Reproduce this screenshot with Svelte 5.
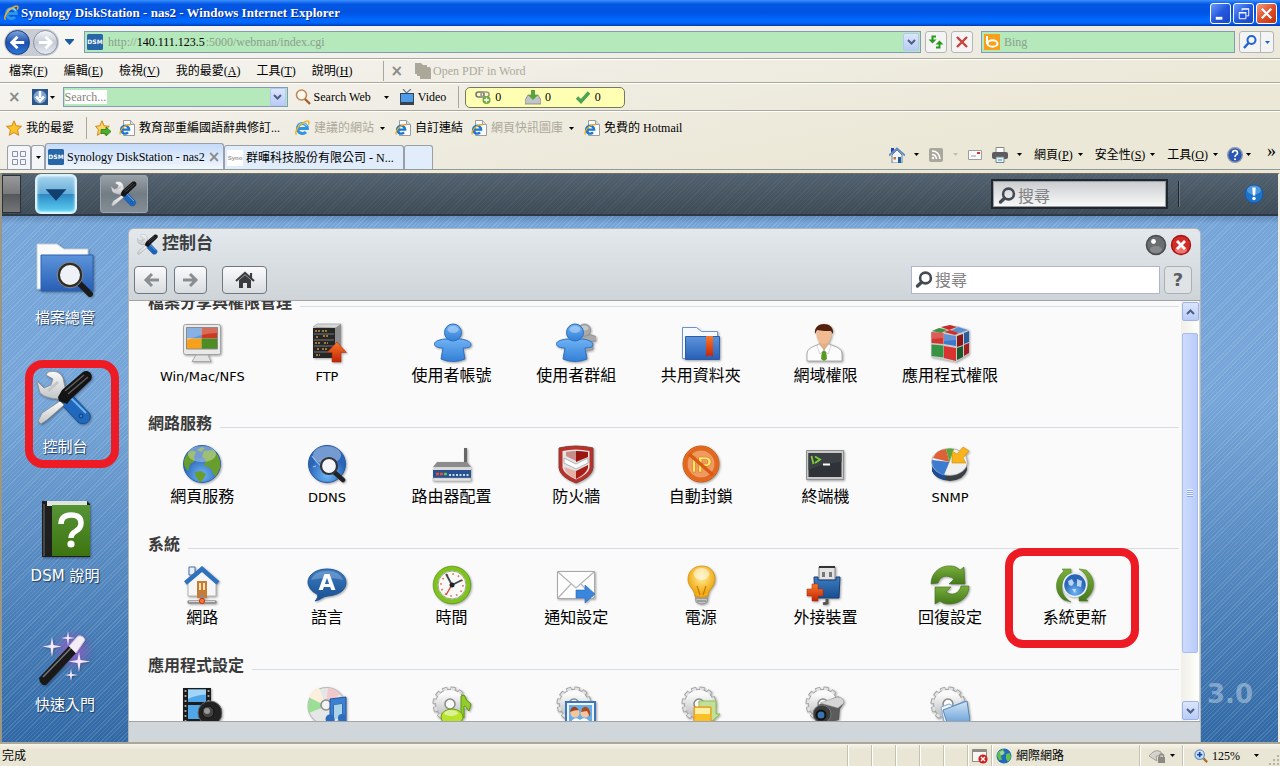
<script lang="ts">
  const menus = [
    { label: '檔案', key: 'F' },
    { label: '編輯', key: 'E' },
    { label: '檢視', key: 'V' },
    { label: '我的最愛', key: 'A' },
    { label: '工具', key: 'T' },
    { label: '說明', key: 'H' },
  ];

  const commands = [
    { label: '網頁', key: 'P' },
    { label: '安全性', key: 'S' },
    { label: '工具', key: 'O' },
  ];

  const shortcuts = [
    { icon: 'explorer', label: '檔案總管' },
    { icon: 'tools', label: '控制台', marked: true },
    { icon: 'book', label: 'DSM 說明' },
    { icon: 'wand', label: '快速入門' },
  ];

  const sections = [
    {
      title: '檔案分享與權限管理',
      items: [
        { icon: 'win', label: 'Win/Mac/NFS', latin: true },
        { icon: 'ftp', label: 'FTP', latin: true },
        { icon: 'user', label: '使用者帳號' },
        { icon: 'group', label: '使用者群組' },
        { icon: 'share', label: '共用資料夾' },
        { icon: 'domain', label: '網域權限' },
        { icon: 'cube', label: '應用程式權限' },
      ],
    },
    {
      title: '網路服務',
      items: [
        { icon: 'globe', label: '網頁服務' },
        { icon: 'ddns', label: 'DDNS', latin: true },
        { icon: 'router', label: '路由器配置' },
        { icon: 'firewall', label: '防火牆' },
        { icon: 'block', label: '自動封鎖' },
        { icon: 'terminal', label: '終端機' },
        { icon: 'snmp', label: 'SNMP', latin: true },
      ],
    },
    {
      title: '系統',
      items: [
        { icon: 'network', label: '網路' },
        { icon: 'language', label: '語言' },
        { icon: 'time', label: '時間' },
        { icon: 'mail', label: '通知設定' },
        { icon: 'power', label: '電源' },
        { icon: 'device', label: '外接裝置' },
        { icon: 'restore', label: '回復設定' },
        { icon: 'update', label: '系統更新', marked: true },
      ],
    },
    {
      title: '應用程式設定',
      items: [
        { icon: 'media', label: '' },
        { icon: 'itunes', label: '' },
        { icon: 'audio', label: '' },
        { icon: 'photo', label: '' },
        { icon: 'download', label: '' },
        { icon: 'camera', label: '' },
        { icon: 'station', label: '' },
      ],
    },
  ];
</script>

{#snippet caret()}
  <svg class="caret" viewBox="0 0 5 3" width="5" height="3"><path d="M0 0h5L2.500 3z" fill="currentColor" /></svg>
{/snippet}

{#snippet ie()}
  <svg viewBox="0 0 16 16" width="16" height="16">
    <path d="M4 8.600h9.400A5 5 0 1 0 12 12" fill="none" stroke="#2f94e4" stroke-width="3" />
    <path d="M4.500 6A4.800 4.800 0 0 1 9 3.400q3 .2 4 2.600" fill="none" stroke="#8fd2fa" stroke-width="1.200" />
    <path d="M2.600 14.600C.4 13 3 7.600 7 4.400s8-4.400 8-2.200c0 .8-.3 1.500-.8 2.400" fill="none" stroke="#f0b020" stroke-width="1.400" />
  </svg>
{/snippet}

{#snippet page()}
  <svg viewBox="0 0 16 16" width="16" height="16">
    <path d="M4.500.500h7l4 4v11h-11z" fill="#fdfdfd" stroke="#9c9c9c" />
    <path d="M11.500.500v4h4" fill="#ddd" stroke="#9c9c9c" />
    <path d="M2.500 9.600h7.600A4 4 0 1 0 9 12.400" fill="none" stroke="#1978d0" stroke-width="2.400" />
    <path d="M1.500 14.500C0 13 2 9 5 6.800s6-3 6-1.400" fill="none" stroke="#f0a818" stroke-width="1.200" />
  </svg>
{/snippet}

{#snippet lens()}
  <svg viewBox="0 0 18 18" width="18" height="18">
    <circle cx="10.500" cy="7" r="5.400" fill="none" stroke="#444b52" stroke-width="2.600" />
    <path d="M6.500 11.200L2.500 15" stroke="#444b52" stroke-width="3.400" stroke-linecap="round" />
  </svg>
{/snippet}

{#snippet dsm()}
  <svg viewBox="0 0 16 16" width="16" height="16">
    <rect width="16" height="16" rx="1.500" fill="#2766a8" />
    <text x="8" y="10" text-anchor="middle" class="mini">DSM</text>
  </svg>
{/snippet}

{#snippet gear()}
  <circle cx="17" cy="17" r="15" fill="none" stroke="#a5a5a5" stroke-width="5" stroke-dasharray="4.850 3" />
  <circle cx="17" cy="17" r="10" fill="none" stroke="#a5a5a5" stroke-width="10" />
  <circle cx="17" cy="17" r="14.500" fill="none" stroke="#e2e2e2" stroke-width="4" stroke-dasharray="3.600 3.990" stroke-dashoffset="-.6" />
  <circle cx="17" cy="17" r="9.500" fill="none" stroke="url(#silver)" stroke-width="9" />
  <circle cx="17" cy="17" r="5" fill="#fafafa" stroke="#8a8a8a" stroke-width="1.500" />
{/snippet}

{#snippet person(fill: string, line: string)}
  <path d="M12 15C4 16 1 18 1.500 20.500S6 24 10 24L8 35q12 5 24 0l-2-11c6 0 8-1 8-3.500S34 16 28 15z" {fill} stroke={line} />
  <circle cx="20" cy="8.500" r="8.500" {fill} stroke={line} />
  <ellipse cx="20" cy="5.500" rx="5.500" ry="3.500" fill="#fff" opacity=".35" />
{/snippet}

{#snippet tools()}
  <path d="M11 2Q22-1 26 8l3 14-6 7Q9 29 3 23L0 11l7 7 7-3 2-6-7-4z" fill="url(#silver)" stroke="#8c8c8c" stroke-width=".8" />
  <path d="M11 21l10-9" stroke="#c4c6c8" stroke-width="3" />
  <path d="M24 34l11-9 17 18c3 4 0 9-3 10s-6 1-8-1z" fill="#1f68bd" stroke="#174f91" />
  <path d="M28 33l6-5 15 15" fill="none" stroke="#72b4f0" stroke-width="2" />
  <circle cx="44" cy="46" r="2" fill="#2f7fd0" stroke="#113a6e" />
  <path d="M23 31l4 4L10 50l-6 4-3-3 4-8z" fill="url(#silver)" stroke="#888" stroke-width=".8" />
  <path d="M21 27l4-7L46 2c5-3 11 2 8 8L34 29l-4 5-8-3z" fill="#141414" />
  <path d="M28 21L47 5M31 24L51 7" stroke="#5c5c5c" stroke-width="1.500" />
{/snippet}

{#snippet appIcon(name: string)}
  <svg class="app-icon" viewBox="-1 -1 40 40" width="40" height="40" aria-hidden="true">
    {#if name === 'win'}
      <rect x=".5" y=".5" width="37" height="30" rx="2" fill="#e9e9e9" stroke="#a2a2a2" />
      <path d="M13 31h12l3 6.500H9z" fill="#e4e4e4" stroke="#a8a8a8" />
      <path d="M3.500 3.500h15v11h-15z" fill="#5f97dd" />
      <path d="M18.500 3.500h16v11h-16z" fill="#cb3a22" />
      <path d="M3.500 14.500h15V25h-15z" fill="#f9a01b" />
      <path d="M18.500 14.500h16V25h-16z" fill="#4d8c22" />
      <path d="M3.500 3.500h31V9Q18 9 3.500 17z" fill="#fff" opacity=".25" />
      <path d="M3.500 3.500h31V25h-31z" fill="none" stroke="#8a8a8a" />
    {:else if name === 'ftp'}
      <path d="M5 3l4-3h24l-4 4z" fill="#d8d8d8" stroke="#999" stroke-width=".6" />
      <path d="M27 4l6-4v30l-6 4z" fill="#8d8d8d" />
      <path d="M5 4h22v30H5z" fill="#262626" />
      <path d="M6 10h20M6 16h20M6 22h20M6 28h20" stroke="#777" stroke-width="1.200" />
      <path d="M7 7h5m2 0h6M8 13h3m4-1h5M7 19h6m3 0h4M9 25h3m2 0h6M8 31h4" stroke="#c99440" stroke-width="1.500" stroke-dasharray="2 1" />
      <path d="M29 18l9.500 10.500H33V38h-9v-9.500h-5z" fill="url(#redArrow)" stroke="#a82706" stroke-width=".5" />
    {:else if name === 'user'}
      {@render person('url(#person)', '#2c6fc0')}
    {:else if name === 'group'}
      <g transform="translate(13 0) scale(.72)">{@render person('#a9a9a9', '#868686')}</g>
      <g transform="translate(-2 0)">{@render person('url(#person)', '#2c6fc0')}</g>
    {:else if name === 'share'}
      <path d="M.5 3.500h14l5 4h16v27H.5z" fill="#f5f8fc" stroke="#6e93c6" />
      <path d="M3.500 12.500h34v23h-34z" fill="url(#folder)" stroke="#2b5ca8" />
      <path d="M24 12h7v21l-3.500-2-3.500 2z" fill="url(#redArrow)" />
    {:else if name === 'domain'}
      <path d="M13 16h10v8l-5 4-5-4z" fill="#eaae7e" />
      <path d="M1 37V30c0-6 6-7 12-10l5 6 5-6c7 3 13 4 13 10v7z" fill="#fcfcfc" stroke="#aaa" />
      <ellipse cx="18" cy="11" rx="7.500" ry="9" fill="#f0bb90" />
      <path d="M9 10C8 3 13 0 18 0s10 3 9 10l-2-3c-4 0-9 0-14-1z" fill="#54210d" />
      <path d="M16 26l2-1.500 2 1.500 1 9-3 2-3-2z" fill="#5a9a20" />
      <path d="M13 20l5 6-4 4-3-8zm10 0l-5 6 4 4 3-8z" fill="#fff" stroke="#bbb" stroke-width=".6" />
    {:else if name === 'cube'}
      <path d="M0 8l12-5 14-1 12 4v24l-13 8L0 33z" fill="#ccc" />
      <path d="M1 7l7-3 8 2-6 3z" fill="#3c9140" />
      <path d="M10 3l9-2 7 2-8 3z" fill="#c62c27" />
      <path d="M27 3l10 3-8 3-9-2z" fill="#5890d0" />
      <path d="M13 8l6-2 9 3-4 2z" fill="#d0302b" />
      <path d="M.5 8l12 1v11L.5 19z" fill="#d2352e" />
      <path d="M13 10l12 2v10l-12-2z" fill="#3e78c8" />
      <path d="M.5 20.500l12 1v12L.5 32z" fill="#399344" />
      <path d="M13 22l12 2v13l-12-3z" fill="#d8332e" />
      <path d="M26 12l6-2v11l-6 2z" fill="#8c1518" />
      <path d="M33 9l5-2v11l-5 2z" fill="#285da0" />
      <path d="M26 24l6-2v11l-6 3z" fill="#1c5a2a" />
      <path d="M33 21l5-2v10l-5 3z" fill="#a11e20" />
      <path d="M1 8l11 1v5L1 15zm12 2l12 2v4l-12 1z" fill="#fff" opacity=".2" />
    {:else if name === 'globe'}
      <circle cx="19" cy="19" r="18.500" fill="url(#sphere)" stroke="#2866ae" />
      <path d="M2 13C5 6 9 4 13 7l-2 5 1 4-5 3-2 7C1 22 0 18 2 13zM21 6l9-1c5 4 8 10 7 18l-4 8c-4-1-3-6-6-8l-6-3 2-5-4-3zM14 5l5-3 3 1-4 4zM12 27l6-1 5 3-2 4-3 4c-4-2-6-6-6-10z" fill="#6a9e2c" />
      <ellipse cx="19" cy="9" rx="14" ry="8" fill="#fff" opacity=".35" />
    {:else if name === 'ddns'}
      <circle cx="19" cy="19" r="18.500" fill="url(#sphere)" stroke="#2358a4" />
      <path d="M4 11q8 12 22 18M5 22l3-1" fill="none" stroke="#cfe0f7" stroke-width="1.200" opacity=".7" />
      <ellipse cx="19" cy="10" rx="14" ry="9" fill="#fff" opacity=".35" />
      <path d="M26 27l9 8" stroke="#222" stroke-width="4.500" stroke-linecap="round" />
      <circle cx="21" cy="21" r="8" fill="#f4f6fa" stroke="#333" stroke-width="2.200" />
    {:else if name === 'router'}
      <path d="M31 3h3v14h-3z" fill="#666" />
      <path d="M4 17h30l4 5H0z" fill="#8b8b8b" />
      <path d="M0 22h38v4H0z" fill="#d8d8d8" />
      <path d="M0 25h38v9H0z" fill="#27518f" />
      <path d="M0 33h38v3H0z" fill="#e4e4e4" stroke="#aaa" stroke-width=".5" />
      <path d="M3 29h3m1 0h3" stroke="#ef4c35" stroke-width="2.500" />
      <path d="M11 29h3" stroke="#6cc04c" stroke-width="2.500" />
      <path d="M16 30h20" stroke="#c8daf2" stroke-width="2" stroke-dasharray="2 1.500" />
    {:else if name === 'firewall'}
      <path d="M2 3q17-4 34 0v20q-1 9-17 15Q3 32 2 23z" fill="#b8322c" stroke="#8b3a36" />
      <path d="M5.500 6q13.500-3 27 0v17q-1 6-13.500 11.500Q7 29 5.500 23z" fill="#e4e4e4" />
      <path d="M9 7q5-1 10-1v10L9 11z" fill="#c98d88" />
      <path d="M19 6q6 0 12 1v5l-12 5z" fill="#9a1610" />
      <path d="M7 13l12 6 12-6v5l-12 6-12-6z" fill="#fff" stroke="#a2a2a2" stroke-width=".8" />
      <path d="M19 26v8q10-5 12-11v-3z" fill="#a81d17" />
      <path d="M19 26v8Q8 29 7 22z" fill="#e5b0a6" />
    {:else if name === 'block'}
      <circle cx="19" cy="19" r="18" fill="#ef8a3e" stroke="#c65518" />
      <circle cx="19" cy="19" r="13.500" fill="#ee9a62" />
      <text x="19.500" y="27" text-anchor="middle" class="ip">IP</text>
      <circle cx="19" cy="19" r="15.500" fill="none" stroke="#e2681f" stroke-width="4" />
      <path d="M7 9l24 21" stroke="#d95a14" stroke-width="3.500" />
    {:else if name === 'terminal'}
      <path d="M.5 5.500h37v29H.5z" fill="#c9c9c9" stroke="#909090" />
      <path d="M2.500 8h33v24h-33z" fill="#2f3236" />
      <path d="M2.500 8h33v9q-18 1-33 8z" fill="#3c3f43" />
      <path d="M5.500 11l2 8M9 11.500l5 3-5 3.500" fill="none" stroke="#77cf35" stroke-width="1.800" />
      <path d="M17 19.500h7" stroke="#fff" stroke-width="2" />
    {:else if name === 'snmp'}
      <path d="M1 18v8q4 9 18 10 14-1 17-11v-8z" fill="#3a3f46" />
      <path d="M1 18v8q3 7 13 9l4-15z" fill="#1c4c96" />
      <ellipse cx="18.500" cy="17" rx="18" ry="13.500" fill="#f0f0f0" stroke="#999" stroke-width=".6" />
      <path d="M18.500 17L1 15q-1 10 12 15z" fill="#3b7bd0" />
      <path d="M18.500 17L2 13Q5 5 15 4z" fill="#dd6036" />
      <path d="M18.500 17L15 4q4-1 8 0z" fill="#58a83c" />
      <path d="M32 2l6 4-6 7 3 5H21V6l5 3z" fill="#f9b41c" stroke="#cf8808" stroke-width=".6" />
    {:else if name === 'network'}
      <path d="M6 1h6v8H6z" fill="#eee" stroke="#4176b4" />
      <path d="M5 14L19 3l14 11v16H5z" fill="#f6f6f6" stroke="#b4b4b4" />
      <path d="M14 15h10v17H14z" fill="#c97a35" />
      <path d="M16 17h2v7h-2zm4 0h2v7h-2z" fill="#fde6b2" />
      <path d="M2.500 17L19 3l16 14" fill="none" stroke="#2e72bd" stroke-width="4.500" />
      <path d="M19 30v5M6 36h26" stroke="#8d8d8d" stroke-width="3.500" stroke-linecap="round" />
      <path d="M6 35.500h26" stroke="#d6d6d6" stroke-width="1.200" />
      <circle cx="19" cy="35" r="2.600" fill="#f7792a" stroke="#cf2f10" />
    {:else if name === 'language'}
      <path d="M19 3c11 0 19 6 19 13.500S31 29 20 30c-5 0-7 4-13 5 3-3 3-5 2-7-5-2-9-7-9-12C0 9 8 3 19 3z" fill="url(#bubble)" stroke="#1f5797" />
      <path d="M3 14Q6 5 19 5t16 9q-15-4-32 0z" fill="#fff" opacity=".22" />
      <text x="19" y="24" text-anchor="middle" class="big-a">A</text>
    {:else if name === 'time'}
      <circle cx="19" cy="19" r="16.500" fill="#f8f8f8" stroke="#7fc31c" stroke-width="4.500" />
      <circle cx="19" cy="19" r="18.800" fill="none" stroke="#528b10" stroke-width=".7" />
      <circle cx="19" cy="19" r="14" fill="none" stroke="#9aa88c" />
      <circle cx="19" cy="19" r="11" fill="none" stroke="#e56a4c" stroke-width="1.600" stroke-dasharray="1.600 4.160" />
      <path d="M19 19L13 8M19 19l10-5" stroke="#444" stroke-width="1.800" />
      <path d="M20 17l-7 12" stroke="#e0452c" stroke-width="1.400" />
      <circle cx="19" cy="19" r="2.500" fill="#222" />
    {:else if name === 'mail'}
      <path d="M.5 5.500h37v27H.5z" fill="#fdfdfd" stroke="#a8a8a8" />
      <path d="M1 32l13-14M37 32L24 18M1 6l18 16L37 6" fill="none" stroke="#b4b4b4" stroke-width="1.200" />
      <path d="M19 24h9v-5l10 9-10 9v-5h-9z" fill="#3987dc" stroke="#2868b6" stroke-width=".6" />
    {:else if name === 'power'}
      <path d="M13 28h13l-1 8q-5 4-11 0z" fill="#c4c4c4" stroke="#878787" stroke-width=".8" />
      <path d="M14 32h11M15 35h9" stroke="#777" />
      <path d="M20 0C11 0 6 6 6 13c0 8 6 9 7 17q7 3 13 0c1-8 7-9 7-17C33 6 28 0 20 0z" fill="url(#bulb)" stroke="#cf8d0b" stroke-width=".7" />
      <path d="M15 20l3 9M24 20l-3 9" stroke="#c47a08" stroke-width="1.200" />
      <ellipse cx="19.500" cy="8" rx="8" ry="6" fill="#fff" opacity=".5" />
    {:else if name === 'device'}
      <path d="M13 1h16v13H13z" fill="#e2e2e2" stroke="#888" /><path d="M13 1h16" stroke="#333" stroke-width="2" />
      <path d="M16 6h3v5h-3zm7 0h3v5h-3z" fill="#777" />
      <path d="M8 11h4v3h18v-3h4l-1 21H9z" fill="url(#bubble)" stroke="#1b3e75" />
      <path d="M21 33v4l-4 1" fill="none" stroke="#555" stroke-width="3" />
      <path d="M6 18h6v5h5v7h-5v5H6v-5H1v-7h5z" fill="url(#redArrow)" stroke="#aa2806" stroke-width=".5" />
    {:else if name === 'restore'}
      <path d="M0 18C0 6 10-1 20 0c4 0 7 2 9 4l4-3 1 17H18l5-5C16 8 9 10 7 17z" fill="url(#green)" stroke="#446f1c" stroke-width=".6" />
      <path d="M38 20C38 32 28 38 18 38c-4 0-7-1-9-3l-5 3V21h16l-5 5c6 4 13 2 15-6z" fill="url(#green)" stroke="#446f1c" stroke-width=".6" />
    {:else if name === 'update'}
      <path d="M15 3L6 3l2 2C-2 13-2 27 8 34l7 2C3 29 4 16 11 9l4 3z" fill="url(#green)" stroke="#4c7920" stroke-width=".5" />
      <path d="M23 35l9 0-2-2c10-8 10-21 0-29l-7-1c12 7 11 20 4 26l-4-3z" fill="url(#green)" stroke="#4c7920" stroke-width=".5" />
      <circle cx="19" cy="19" r="11.500" fill="url(#sphere)" stroke="#e8f0fa" stroke-width="1.500" />
      <path d="M12 15l4-2 2 4-2 3-3-1zM21 13l5 2-1 6-4-1zM16 23l4 0-1 4z" fill="#dcecff" opacity=".8" />
    {:else if name === 'media'}
      <path d="M0 1h28v37H0z" fill="#1c1c1c" />
      <path d="M2.500 3v34M25.500 3v34" stroke="#a5a5a5" stroke-width="1.800" stroke-dasharray="2 3" />
      <path d="M5 2.500h18V15H5zM5 18h18v14H5z" fill="#4fa7e8" />
      <path d="M5 2.500h18v5Q12 8 5 12z" fill="#a2d4f8" />
      <circle cx="27" cy="26" r="12" fill="#222" stroke="#666" />
      <circle cx="25" cy="25" r="6" fill="#444" stroke="#111" /><circle cx="24" cy="24" r="3" fill="#999" />
    {:else if name === 'itunes'}
      <circle cx="18.500" cy="19" r="18.500" fill="#e4e7e6" stroke="#b5b5b5" />
      <path d="M18 19L1 10q3-7 10-9z" fill="#fcf0dc" /><path d="M18 19L1 26Q-1 18 2 11z" fill="#9adf94" />
      <path d="M18 19L20 1q8 1 12 6z" fill="#f3c8cc" /><path d="M18 19l15-10q4 5 4 9z" fill="#c8d7f2" />
      <circle cx="18" cy="18" r="5" fill="#f3f3f3" stroke="#8b8b8b" stroke-width="1.500" />
      <path d="M22 12l16-2v24h-4V17l-8 1v18h-4z" fill="#3d7fd0" stroke="#22569c" />
      <path d="M26 18l8-1v15h-8z" fill="#a9d4e8" />
      <circle cx="22" cy="32" r="4.500" fill="#2c6cbf" /><circle cx="34" cy="31" r="4" fill="#2c6cbf" />
    {:else if name === 'audio'}
      {@render gear()}
      <path d="M28 28V9l3-1q2 6 7 9-1 4-2 7-3-5-5-5v12z" fill="#93cd2c" stroke="#5b9514" />
      <ellipse cx="19" cy="30" rx="11" ry="8" fill="#b9e22a" stroke="#66a012" />
      <ellipse cx="18" cy="26" rx="7" ry="3" fill="#fff" opacity=".5" />
    {:else if name === 'photo'}
      {@render gear()}
      <path d="M9 15h29v24H9z" fill="#eef4fb" stroke="#3e74b8" stroke-width="2" />
      <path d="M12 18h23v20H12z" fill="#67aee8" />
      <circle cx="18" cy="26" r="4.500" fill="#f3c79d" /><path d="M13 25q1-6 6-5l3 3q-5 0-9 2z" fill="#a2431a" />
      <circle cx="28" cy="26" r="4.500" fill="#f3c79d" /><path d="M24 25q1-6 6-5 4 3 3 10l-3-6z" fill="#b04a1c" />
      <path d="M12 38q5-10 11-5 6-5 12 5z" fill="#fff" />
    {:else if name === 'download'}
      {@render gear()}
      <path d="M17 14h17v13h4l-10 9H17z" fill="#c3e09a" stroke="#8abf52" />
      <path d="M12 20h17v14h4l-10 6-14-5h3z" fill="#fcbf28" stroke="#e49014" />
      <path d="M13 21h15v6H13z" fill="#fdf0a4" />
    {:else if name === 'camera'}
      {@render gear()}
      <path d="M12 18l18-8q8 0 8 6l-4 6-1 11-20 5z" fill="#5b5b5b" />
      <path d="M14 16l17-6q7 0 7 6l-6 5z" fill="#d6d6d6" stroke="#999" stroke-width=".5" />
      <circle cx="16" cy="27" r="9" fill="#3c3c3c" stroke="#777" /><circle cx="15" cy="28" r="4.500" fill="#3a74b0" stroke="#111" stroke-width="2" />
    {:else if name === 'station'}
      {@render gear()}
      <path d="M10 20l8-3 4 2 12-5 4 20-24 5z" fill="#eef5fc" stroke="#88a9cc" />
      <path d="M12 23l24-9 3 20-22 5z" fill="url(#lightFolder)" stroke="#5785b8" />
    {/if}
  </svg>
{/snippet}

{#snippet deskIcon(name: string)}
  <svg class="desk-icon" viewBox="0 0 60 60" width="60" height="60" aria-hidden="true">
    {#if name === 'explorer'}
      <path d="M2 3h20l7 5h24v40H2z" fill="#f8fafc" stroke="#c3cedb" />
      <path d="M6 14h52v36H6z" fill="url(#folder)" stroke="#2d62b0" />
      <path d="M44 42l11 11" stroke="#1b1b1b" stroke-width="6" stroke-linecap="round" />
      <circle cx="35" cy="34" r="11.500" fill="#eef2f6" stroke="#2d2d2d" stroke-width="3" />
      <circle cx="35" cy="34" r="12.800" fill="none" stroke="#aaa" stroke-width=".7" />
    {:else if name === 'tools'}
      <g transform="translate(2 0)">{@render tools()}</g>
    {:else if name === 'book'}
      <path d="M7 2h45l3 3v53H7z" fill="#1f1f1f" />
      <path d="M12 2h40v5H12z" fill="#dfe5dd" />
      <path d="M17 6h38v51H17z" fill="url(#bookGreen)" />
      <path d="M9 5v52" stroke="#555" stroke-width="1.500" />
      <path d="M26 25q0-9 10-9t10 8q0 5-5 8t-5 7" fill="none" stroke="#fff" stroke-width="5.500" />
      <circle cx="36" cy="45" r="3.600" fill="#fff" />
    {:else}
      <circle cx="38" cy="22" r="22" fill="url(#glow)" />
      <path d="M4 50L34 18l7 7L11 57q-6 1-7-7z" fill="#191919" />
      <path d="M8 49l28-29" stroke="#777" stroke-width="1.500" />
      <path d="M34 18l9-10q5-1 7 4L41 25z" fill="#f3eef6" stroke="#cbbcd4" />
      <path d="M17 9l1.500 8 8 1.500-8 1.500L17 29l-1.500-9-8-1.500 8-1.500zM33 3l1 6 6 1-6 1-1 7-1-7-6-1 6-1zM44 24l1.500 8 10 1.500-10 1.500L44 44l-1.500-9-9-1.500 9-1.500zM36 41l1 5 6 1-6 1-1 5-1-5-5-1 5-1z" fill="#f6e6ff" />
    {/if}
  </svg>
{/snippet}

<svg class="defs" width="0" height="0" aria-hidden="true">
  <defs>
    <linearGradient id="silver" x2="0" y2="1"><stop stop-color="#fafafa" /><stop offset="1" stop-color="#c2c5c8" /></linearGradient>
    <linearGradient id="person" x2="0" y2="1"><stop stop-color="#6fb2f4" /><stop offset="1" stop-color="#327fd6" /></linearGradient>
    <linearGradient id="folder" x2="0" y2="1"><stop stop-color="#5c94db" /><stop offset="1" stop-color="#285fb6" /></linearGradient>
    <linearGradient id="lightFolder" x2="0" y2="1"><stop stop-color="#d2e5f7" /><stop offset="1" stop-color="#5e9ad4" /></linearGradient>
    <linearGradient id="redArrow" x2="0" y2="1"><stop stop-color="#f8782c" /><stop offset="1" stop-color="#c22406" /></linearGradient>
    <linearGradient id="green" x2="0" y2="1"><stop stop-color="#79ae3c" /><stop offset="1" stop-color="#45791c" /></linearGradient>
    <linearGradient id="bookGreen" x2="0" y2="1"><stop stop-color="#569436" /><stop offset="1" stop-color="#3d7410" /></linearGradient>
    <linearGradient id="bubble" x2="0" y2="1"><stop stop-color="#3c7cc2" /><stop offset="1" stop-color="#184f90" /></linearGradient>
    <radialGradient id="sphere" cy=".8"><stop stop-color="#6fb6f6" /><stop offset="1" stop-color="#2a66b8" /></radialGradient>
    <radialGradient id="bulb" cy=".35"><stop stop-color="#fff0a0" /><stop offset="1" stop-color="#f2ac14" /></radialGradient>
    <radialGradient id="glow"><stop stop-color="#b060e0" stop-opacity=".9" /><stop offset="1" stop-color="#8f7de0" stop-opacity="0" /></radialGradient>
  </defs>
</svg>

<div class="browser">
  <header class="titlebar">
    {@render ie()}
    <h1>Synology DiskStation - nas2 - Windows Internet Explorer</h1>
    <div class="window-buttons">
      <button aria-label="最小化"><svg viewBox="0 0 20 20"><path d="M5 15h7" stroke="#fff" stroke-width="3" /></svg></button>
      <button aria-label="還原"><svg viewBox="0 0 20 20" fill="none" stroke="#fff"><path d="M8.500 7V5.500h7v7H13M8 5h8" /><path d="M5.500 9.500h7v6h-7zM5 9h8" /></svg></button>
      <button class="close" aria-label="關閉"><svg viewBox="0 0 20 20"><path d="M5 5l10 10M15 5L5 15" stroke="#fff" stroke-width="2.400" /></svg></button>
    </div>
  </header>

  <div class="address-row">
    <div class="travel">
      <button class="back" aria-label="上一頁"><svg viewBox="0 0 24 24"><path d="M19 12H7m5-6l-6 6 6 6" fill="none" stroke="#fff" stroke-width="3" /></svg></button>
      <button class="forward" aria-label="下一頁"><svg viewBox="0 0 24 24"><path d="M5 12h12m-5-6l6 6-6 6" fill="none" stroke="#fff" stroke-width="3" /></svg></button>
    </div>
    <button class="plain history" aria-label="最近的網頁"><svg viewBox="0 0 9 6" width="9" height="6"><path d="M0 0h9v1L4.500 6 0 1z" fill="#1c5aa4" /></svg></button>
    <div class="field address">
      {@render dsm()}
      <span class="url"><span>http://</span><input aria-label="網址" value="140.111.123.5" /><span>:5000/webman/index.cgi</span></span>
      <button class="drop" aria-label="展開"><svg viewBox="0 0 9 6" width="9" height="6"><path d="M1 1l3.500 3.500L8 1" fill="none" stroke="#4d6185" stroke-width="2" /></svg></button>
    </div>
    <button class="tool" aria-label="重新整理"><svg viewBox="0 0 20 20"><path d="M10 4.500H6.500V8" fill="none" stroke="#2b9a1c" stroke-width="2" /><path d="M2.500 7.500h8l-4 4z" fill="#2b9a1c" /><path d="M10 15.500h3.500V12" fill="none" stroke="#2b9a1c" stroke-width="2" /><path d="M9.500 12.500h8l-4-4z" fill="#2b9a1c" /></svg></button>
    <button class="tool" aria-label="停止"><svg viewBox="0 0 20 20"><path d="M5 5l10 10M15 5L5 15" stroke="#c8413c" stroke-width="2.400" /></svg></button>
    <div class="field bing">
      <svg viewBox="0 0 16 16" width="16" height="16"><rect width="16" height="16" fill="#f9a01b" /><path d="M3 2v8" stroke="#fff" stroke-width="2" /><ellipse cx="8.500" cy="9.500" rx="5" ry="3.200" fill="none" stroke="#fff" stroke-width="2" /></svg>
      <input aria-label="Bing" placeholder="Bing" />
    </div>
    <div class="split">
      <button aria-label="搜尋"><svg viewBox="0 0 20 20" width="20" height="20"><circle cx="11.500" cy="8" r="4" fill="none" stroke="#1d62d8" stroke-width="2" /><path d="M8.500 11L4 16" stroke="#1d62d8" stroke-width="2.400" /></svg></button>
      <button class="blue" aria-label="搜尋選項">{@render caret()}</button>
    </div>
  </div>

  <nav class="menu-row">
    {#each menus as menu}
      <button class="plain">{menu.label}(<u>{menu.key}</u>)</button>
    {/each}
    <div class="pdf">
      <span class="x">×</span>
      <svg viewBox="0 0 16 16" width="16" height="16"><path d="M0 0h6l2 2h4v2h3l1 2v10H5v-3H2v-2H0z" fill="#aca899" /></svg>
      <span>Open PDF in Word</span>
    </div>
  </nav>

  <div class="search-row">
    <span class="x">×</span>
    <button class="plain downloads" aria-label="下載">
      <svg viewBox="0 0 16 16" width="16" height="16"><rect width="16" height="16" fill="#2b568c" /><circle cx="8" cy="8" r="6.500" fill="#7fa3cc" /><path d="M8 2v7M4 7.500L8 12l4-4.500" fill="none" stroke="#fff" stroke-width="2.600" /></svg>
      {@render caret()}
    </button>
    <div class="field quick">
      <input aria-label="Search" placeholder="Search..." />
      <button class="drop" aria-label="展開"><svg viewBox="0 0 9 6" width="9" height="6"><path d="M1 1l3.500 3.500L8 1" fill="none" stroke="#4d6185" stroke-width="2" /></svg></button>
    </div>
    <button class="plain web">
      <svg viewBox="0 0 16 16" width="16" height="16"><circle cx="6.500" cy="6" r="5" fill="#fff8ec" stroke="#c08858" stroke-width="1.600" /><path d="M10 10l5 5" stroke="#a5622c" stroke-width="2.400" /></svg>
      Search Web
    </button>
    {@render caret()}
    <button class="plain video">
      <svg viewBox="0 0 16 16" width="16" height="16"><path d="M4 0l3.500 4L12 0" fill="none" stroke="#5d7c94" stroke-width="1.200" /><path d="M1 4h14v12H1z" fill="#36424e" /><path d="M2 5h12v8H2z" fill="#4b9be8" /></svg>
      Video
    </button>
    <span class="rule"></span>
    <div class="counters">
      <span><svg viewBox="0 0 16 16" width="16" height="16"><rect x="1" y="3" width="8" height="5" rx="2.500" fill="none" stroke="#777" stroke-width="1.600" /><rect x="6" y="3" width="8" height="5" rx="2.500" fill="none" stroke="#999" stroke-width="1.600" /><circle cx="11.500" cy="11" r="4" fill="#6da83c" /><path d="M11.500 8.500v5M9 11h5" stroke="#fff" stroke-width="1.400" /></svg>0</span>
      <span><svg viewBox="0 0 16 16" width="16" height="16"><path d="M3 6h10l3 5v4H0v-4z" fill="#c2c4c8" stroke="#808389" stroke-width=".8" /><path d="M6 1h4v5h3l-5 5-5-5h3z" fill="#59a53c" /></svg>0</span>
      <span><svg viewBox="0 0 16 16" width="16" height="16"><path d="M2 8.500l4 4L14 3.500" fill="none" stroke="#4ba353" stroke-width="3.400" /></svg>0</span>
    </div>
  </div>

  <nav class="favorites">
    <button class="plain star">
      <svg viewBox="0 0 16 16" width="16" height="16"><path d="M8 .800l2.200 5 5.300.500-4 3.600 1.200 5.400L8 12.500l-4.700 2.800 1.200-5.400-4-3.600 5.300-.500z" fill="#fcc32c" stroke="#d1861a" /></svg>
      我的最愛
    </button>
    <span class="rule"></span>
    <button class="plain" aria-label="新增到我的最愛列"><svg viewBox="0 0 16 16" width="16" height="16"><path d="M7 .800l2 5 5.300.500-4 3.600 1.200 5.400L7 12.500l-4.700 2.800 1.200-5.400-3-3.600 4.300-.500z" fill="#fcd468" stroke="#d1861a" /><path d="M6 9.500h5V7l5 4.500-5 4.500v-2.500H6z" fill="#4caf2c" stroke="#2a7d14" stroke-width=".8" /></svg></button>
    <a href="#edu">{@render page()}教育部重編國語辭典修訂...</a>
    <a href="#suggested" class="dim suggested">{@render ie()}建議的網站<i>{@render caret()}</i></a>
    <a href="#custom">{@render page()}自訂連結</a>
    <a href="#slices" class="dim">{@render page()}網頁快訊圖庫<i>{@render caret()}</i></a>
    <a href="#hotmail">{@render page()}免費的 Hotmail</a>
  </nav>

  <div class="tab-row">
    <div class="tabs">
      <button class="tab grid-tab" aria-label="快速索引標籤"><svg viewBox="0 0 16 14" width="16" height="14" fill="#f3f5fb" stroke="#8a8fa8"><path d="M1.500.500h5v5h-5zM9.500.500h5v5h-5zM1.500 8.500h5v5h-5zM9.500 8.500h5v5h-5z" /></svg></button>
      <button class="tab list-tab" aria-label="索引標籤清單">{@render caret()}</button>
      <button class="tab active">{@render dsm()}<span>Synology DiskStation - nas2</span><span class="x">×</span></button>
      <button class="tab other"><svg viewBox="0 0 16 16" width="16" height="16"><rect width="16" height="16" fill="#fff" /><text x="8" y="10" text-anchor="middle" class="syno">Syno</text></svg><span>群暉科技股份有限公司 - N...</span></button>
      <button class="tab new-tab" aria-label="新索引標籤"></button>
    </div>
    <div class="commands">
      <button class="plain" aria-label="首頁"><svg viewBox="0 0 16 16" width="16" height="16"><path d="M2 1h3v5H2z" fill="#1d44c4" /><path d="M3 8l5-5 5 5v8H3z" fill="#f0f4fa" stroke="#6f7f98" /><path d="M0 8.500l8-7 8 7" fill="none" stroke="#5f8cc0" stroke-width="1.800" /><path d="M9 10h3v6H9z" fill="#1e5f9c" /><path d="M4.500 10h2.500v2.500H4.500z" fill="#b5763c" /></svg></button>
      {@render caret()}
      <button class="plain" aria-label="摘要"><svg viewBox="0 0 16 16" width="16" height="16"><rect x="1" y="1" width="14" height="14" rx="2" fill="#aaa79b" /><path d="M4 4q7 0 8 8M4 7.500q4 0 4.500 4.500" fill="none" stroke="#fff" stroke-width="1.600" /><circle cx="5" cy="11" r="1.200" fill="#fff" /></svg></button>
      <span class="faint">{@render caret()}</span>
      <button class="plain" aria-label="讀取郵件"><svg viewBox="0 0 16 16" width="16" height="16"><path d="M1.500 3.500h13v9h-13z" fill="#fafafa" stroke="#9d9da5" /><path d="M10 5h3v2h-3z" fill="#d03a2c" /><path d="M4 9h5" stroke="#999" /></svg></button>
      <button class="plain" aria-label="列印"><svg viewBox="0 0 16 16" width="16" height="16"><path d="M4 .500h8V6H4z" fill="#fff" stroke="#888" /><rect y="5" width="16" height="7" rx="2" fill="#5c5c60" /><path d="M4 10h8v5.500H4z" fill="#e6f1f6" stroke="#77828a" /><path d="M6 13h4" stroke="#2f9ac0" /></svg></button>
      {@render caret()}
      {#each commands as item}
        <button class="plain command"><span>{item.label}(<u>{item.key}</u>)</span>{@render caret()}</button>
      {/each}
      <button class="plain help" aria-label="說明"><svg viewBox="0 0 16 16" width="16" height="16"><circle cx="8" cy="8" r="7.300" fill="#2a56b4" stroke="#8b95ac" stroke-width="1.400" /><path d="M5.500 6q0-2.500 2.500-2.500T10.500 6q0 1.200-1.300 1.900T8 10" fill="none" stroke="#fff" stroke-width="1.600" /><circle cx="8" cy="12.200" r="1" fill="#fff" /></svg>{@render caret()}</button>
      <span class="more">»</span>
    </div>
  </div>

  <main class="viewport">
    <div class="taskbar">
      <span class="handle"></span>
      <button class="start" aria-label="主選單"><svg viewBox="0 0 38 38" width="38" height="38"><path d="M8 14h22L19 26z" fill="#123f6e" /></svg></button>
      <button class="task" aria-label="控制台"><svg viewBox="-2 -2 60 60" width="28" height="28">{@render tools()}</svg></button>
      <div class="find">{@render lens()}<input aria-label="搜尋" placeholder="搜尋" /></div>
      <span class="sep"></span>
      <button class="plain notice" aria-label="通知"><svg viewBox="0 0 20 20" width="20" height="20"><circle cx="10" cy="10" r="9" fill="#1d73c9" stroke="#1558a4" /><ellipse cx="10" cy="6" rx="7" ry="4.500" fill="#6db2ee" opacity=".6" /><path d="M8.300 3.500h3.400l-.5 8H8.800z" fill="#fff" /><circle cx="10" cy="14.500" r="1.700" fill="#fff" /></svg></button>
    </div>

    <div class="desktop">
      <nav class="shortcuts">
        {#each shortcuts as item}
          <button class="shortcut" class:marked={item.marked}>
            {@render deskIcon(item.icon)}
            <span>{item.label}</span>
          </button>
        {/each}
      </nav>

      <section class="panel">
        <header class="panel-head">
          <div class="panel-title">
            <svg viewBox="0 0 58 58" width="22" height="22">{@render tools()}</svg>
            <h2>控制台</h2>
            <button class="plain" aria-label="最小化視窗"><svg viewBox="0 0 22 22" width="22" height="22"><circle cx="11" cy="11" r="9.500" fill="#6b6e71" stroke="#4a4c4f" stroke-width="1.600" /><ellipse cx="11" cy="15.500" rx="6" ry="3.500" fill="#8d9093" opacity=".8" /><circle cx="8.500" cy="7.500" r="2.400" fill="#fff" /></svg></button>
            <button class="plain" aria-label="關閉視窗"><svg viewBox="0 0 22 22" width="22" height="22"><circle cx="11" cy="11" r="9.500" fill="#d22c28" stroke="#a51614" stroke-width="1.400" /><ellipse cx="11" cy="16" rx="6" ry="3.500" fill="#f08a80" opacity=".8" /><path d="M7 7l8 8M15 7l-8 8" stroke="#fff" stroke-width="2.800" /></svg></button>
          </div>
          <div class="panel-tools">
            <button class="nav-button" aria-label="返回"><svg viewBox="0 0 20 20" width="20" height="20"><path d="M18 10H5m6-6l-6 6 6 6" fill="none" stroke="#8b8e91" stroke-width="3" /></svg></button>
            <button class="nav-button" aria-label="前進"><svg viewBox="0 0 20 20" width="20" height="20"><path d="M2 10h13M9 4l6 6-6 6" fill="none" stroke="#8b8e91" stroke-width="3" /></svg></button>
            <button class="nav-button home" aria-label="控制台首頁"><svg viewBox="0 0 20 20" width="20" height="20"><path d="M4 10l6-5 6 5v8h-4v-5H8v5H4z" fill="#3a3d40" /><path d="M1 11l9-8 9 8M16 3v5" fill="none" stroke="#3a3d40" stroke-width="2.200" /></svg></button>
            <div class="panel-search">{@render lens()}<input aria-label="搜尋控制台" placeholder="搜尋" /></div>
            <button class="question">?</button>
          </div>
        </header>

        <div class="panel-body">
          <div class="sections">
            {#each sections as section}
              <section>
                <h3>{section.title}</h3>
                <div class="items">
                  {#each section.items as item}
                    <button class="item" class:latin={item.latin} class:marked={item.marked}>
                      {@render appIcon(item.icon)}
                      <span>{item.label}</span>
                    </button>
                  {/each}
                </div>
              </section>
            {/each}
          </div>
          <div class="scrollbar">
            <button class="drop" aria-label="向上"><svg viewBox="0 0 9 6" width="9" height="6"><path d="M1 5l3.500-3.500L8 5" fill="none" stroke="#4d6185" stroke-width="2" /></svg></button>
            <div class="track"><div class="thumb"></div></div>
            <button class="drop" aria-label="向下"><svg viewBox="0 0 9 6" width="9" height="6"><path d="M1 1l3.500 3.500L8 1" fill="none" stroke="#4d6185" stroke-width="2" /></svg></button>
          </div>
        </div>
        <footer class="panel-foot"></footer>
      </section>

      <span class="version">3.0</span>
    </div>
  </main>

  <footer class="status">
    <span class="done">完成</span>
    <span class="cell"></span>
    <span class="cell"></span>
    <span class="cell"></span>
    <span class="cell"></span>
    <span class="cell"></span>
    <span class="cell"><svg viewBox="0 0 16 16" width="16" height="16"><path d="M.5 1.500h14v12H.500z" fill="#f6f6f2" stroke="#8d8d86" /><path d="M.5 3h14" stroke="#8d8d86" stroke-width="2" /><circle cx="11" cy="11" r="4.600" fill="#cc2222" /><path d="M9 9l4 4M13 9l-4 4" stroke="#fff" stroke-width="1.400" /></svg></span>
    <span class="cell zone"><svg viewBox="0 0 16 16" width="16" height="16"><circle cx="8" cy="8" r="7.500" fill="#2468c0" /><path d="M2 4l5-3 2 4-4 3 1 4-3 0q-3-4-1-8zM10 6l4-1 1 5-3 4-2-3z" fill="#5fc04a" /><circle cx="6" cy="5" r="2" fill="#c8e6ff" opacity=".6" /></svg>網際網路</span>
    <span class="cell lock"><svg viewBox="0 0 18 18" width="18" height="18"><path d="M1 9q6-8 12-4l1 4H8l1 5z" fill="#d4d3cc" stroke="#a3a29b" /><path d="M10 10h7v6h-7z" fill="#8b8a84" /><path d="M11.500 10V8q2-2 4 0v2" fill="none" stroke="#8b8a84" stroke-width="1.400" /></svg>{@render caret()}</span>
    <span class="cell zoom"><svg viewBox="0 0 16 16" width="14" height="14"><path d="M10 10l5 5" stroke="#a5702c" stroke-width="2.600" /><circle cx="6.500" cy="6.500" r="5.400" fill="#cfe4fb" stroke="#6b93c4" stroke-width="1.400" /><path d="M6.500 3.500v6M3.500 6.500h6" stroke="#1749a8" stroke-width="2" /></svg>125%<i>{@render caret()}</i><svg class="grip" viewBox="0 0 12 12" width="12" height="12"><path d="M9 1h2v2H9zM5 5h2v2H5zM9 5h2v2H9zM1 9h2v2H1zM5 9h2v2H5zM9 9h2v2H9z" fill="#b8b4a2" /></svg></span>
  </footer>
</div>

<style>
  :global(body) {
    background: #ece9d8;
  }

  .browser {
    display: flex;
    flex-direction: column;
    height: 100vh;
    overflow: hidden;
    background: linear-gradient(170deg, #f8f8f7, #f0eee5 160px, #ebe8d7 300px);
    color: #000;
    font: 12px/16px "Liberation Serif", "Noto Sans CJK TC", serif;
  }

  .browser * {
    box-sizing: border-box;
  }

  svg {
    flex: none;
  }

  .defs {
    position: absolute;
  }

  button,
  input {
    font: inherit;
    color: inherit;
    padding: 0;
    margin: 0;
  }

  button {
    display: flex;
    align-items: center;
    white-space: nowrap;
  }

  input {
    border: 0;
    outline: 0;
    background: none;
    min-width: 0;
  }

  i {
    display: flex;
    color: #000;
  }

  .plain {
    border: 0;
    background: none;
  }

  .x {
    color: #8a8a86;
    font: bold 15px/16px "DejaVu Sans", sans-serif;
  }

  .mini {
    fill: #fff;
    font: bold 6px "DejaVu Sans", sans-serif;
  }

  .syno {
    fill: #999;
    font: bold 6px "Liberation Sans", sans-serif;
  }

  .ip {
    fill: #ffe36a;
    stroke: #d07a20;
    stroke-width: 0.600;
    font: bold 22px "Liberation Sans", sans-serif;
  }

  .big-a {
    fill: #fff;
    font: bold 22px "DejaVu Sans", sans-serif;
  }

  .rule {
    width: 1px;
    height: 22px;
    background: #aca899;
  }

  /* title bar */
  .titlebar {
    display: flex;
    align-items: center;
    gap: 2px;
    flex: none;
    height: 26px;
    padding: 0 3px;
    background: linear-gradient(#3b92ff, #0558e4 4px, #0052e0 12px, #0069ff 20px, #0065f8 23px, #0039b0);
  }

  h1 {
    flex: 1;
    margin: 0;
    color: #fff;
    font-size: 13px;
    text-shadow: 1px 1px 0 #0b2a86;
  }

  .window-buttons {
    display: flex;
    gap: 2px;
  }

  .window-buttons button {
    width: 21px;
    height: 21px;
    border: 1px solid #fff;
    border-radius: 3px;
    background: linear-gradient(135deg, #6d9bf8, #2359e0 50%, #1c46c4);
  }

  .window-buttons .close {
    background: linear-gradient(135deg, #f0a080, #e0502c 50%, #c2320c);
  }

  /* address row */
  .address-row {
    display: flex;
    align-items: center;
    flex: none;
    gap: 4px;
    height: 33px;
    padding: 0 6px 0 4px;
    border-bottom: 1px solid #aca899;
  }

  .travel {
    display: flex;
    gap: 3px;
    padding: 1px;
    border-radius: 14px;
    background: #c9ccd2;
  }

  .travel button {
    width: 25px;
    height: 25px;
    border: 1px solid #8994a8;
    border-radius: 50%;
  }

  .travel .back {
    background: linear-gradient(#7ea4dc, #1c4fae 50%, #2c78d8);
    border-color: #1b3d7d;
  }

  .travel .forward {
    background: linear-gradient(#f4f6fa, #c3c9d4 50%, #e6eaf2);
  }

  .history {
    width: 14px;
    justify-content: center;
    margin: 0 4px 0 -1px;
  }

  .field {
    display: flex;
    align-items: center;
    border: 1px solid #7f9db9;
    background: #b5e8bb;
  }

  .address {
    flex: 1;
    gap: 5px;
    height: 22px;
    padding: 0 1px 0 2px;
  }

  .url {
    display: flex;
    flex: 1;
    color: #8ba08c;
  }

  .url input {
    width: 69px;
    color: #000;
  }

  .drop {
    justify-content: center;
    width: 16px;
    height: 18px;
    border: 1px solid #b4c8f4;
    border-radius: 2px;
    background: linear-gradient(#dbe5fd, #b9cbf6);
  }

  .tool,
  .split {
    height: 22px;
    border: 1px solid #b3b5bd;
    border-radius: 3px;
    background: #f4f4f4;
  }

  .tool {
    width: 22px;
  }

  .bing {
    width: 20%;
    height: 22px;
    gap: 4px;
    padding: 0 2px;
    margin-left: 4px;
  }

  .bing input {
    flex: 1;
  }

  .bing input::placeholder {
    color: #8ba08c;
    opacity: 1;
  }

  .split {
    display: flex;
    width: 35px;
  }

  .split button {
    justify-content: center;
    flex: 1;
    border: 0;
    background: none;
  }

  .split .blue {
    flex: none;
    width: 13px;
    border-left: 1px solid #b3b5bd;
    color: #1d62d8;
  }

  /* toolbars */
  .menu-row {
    display: flex;
    align-items: center;
    flex: none;
    gap: 16px;
    height: 24px;
    padding-left: 9px;
    border-top: 1px solid #fff;
    border-bottom: 1px solid #aca899;
  }

  .pdf {
    display: flex;
    align-items: center;
    gap: 2px;
    height: 20px;
    margin-left: 15px;
    padding-left: 6px;
    border-left: 1px solid #aca899;
    color: #aca899;
  }

  .pdf .x {
    margin-right: 10px;
  }

  .search-row {
    display: flex;
    align-items: center;
    flex: none;
    height: 28px;
    padding-left: 8px;
    border-top: 1px solid #fff;
    border-bottom: 1px solid #aca899;
  }

  .downloads {
    gap: 2px;
    margin: 0 8px 0 11px;
  }

  .quick {
    width: 225px;
    height: 20px;
    padding: 1px;
    margin-right: 7px;
  }

  .quick input {
    flex: 1;
    line-height: 14px;
  }

  .quick input::placeholder {
    background: linear-gradient(#fff, #fff) 0 0 / 42px 100% no-repeat;
    color: #85857c;
    opacity: 1;
  }

  .web,
  .video {
    gap: 3px;
  }

  .web {
    margin-right: 13px;
  }

  .video {
    margin: 0 12px 0 10px;
  }

  .counters {
    display: flex;
    align-items: center;
    width: 160px;
    height: 21px;
    margin-left: 6px;
    padding-left: 9px;
    border: 1px solid #77775c;
    border-radius: 5px;
    background: #ffffb4;
  }

  .counters span {
    display: flex;
    align-items: center;
    gap: 4px;
    width: 53px;
  }

  .favorites {
    display: flex;
    align-items: center;
    flex: none;
    gap: 8px;
    height: 33px;
    padding-left: 6px;
    border-top: 1px solid #fff;
  }

  .star {
    gap: 4px;
    margin-right: 4px;
  }

  .favorites a {
    display: flex;
    align-items: center;
    gap: 4px;
    color: #000;
    text-decoration: none;
    white-space: nowrap;
  }

  .favorites a.dim {
    color: #aca899;
  }

  .favorites .suggested {
    margin-left: 6px;
  }

  .favorites a i {
    margin: 0 2px;
  }

  .tab-row {
    display: flex;
    align-items: flex-end;
    justify-content: space-between;
    flex: none;
    height: 26px;
    padding-left: 7px;
    border-bottom: 1px solid #919b9c;
  }

  .tabs {
    display: flex;
    align-items: flex-end;
  }

  .tab {
    height: 24px;
    gap: 3px;
    padding: 0 2px;
    border: 1px solid #9a9fa8;
    border-bottom: 0;
    border-radius: 3px 3px 0 0;
    background: #e1edfa;
  }

  .grid-tab {
    width: 24px;
    justify-content: center;
    background: #f3f5f8;
  }

  .list-tab {
    width: 14px;
    justify-content: center;
    background: #f3f5f8;
  }

  .active {
    width: 179px;
    height: 26px;
    background: linear-gradient(#c5dbf9, #f1f7fe);
  }

  .active .x {
    margin: 0 3px 0 auto;
  }

  .other {
    width: 180px;
  }

  .new-tab {
    width: 29px;
  }

  .commands {
    display: flex;
    align-items: center;
    align-self: center;
    gap: 9px;
    padding: 0 4px 4px 0;
  }

  .command {
    gap: 5px;
    margin-left: 3px;
  }

  .commands .help {
    gap: 3px;
  }

  .faint {
    display: flex;
    color: #c2bfb0;
  }

  .more {
    align-self: flex-start;
    margin-left: 7px;
    font-size: 18px;
    line-height: 8px;
  }

  /* page */
  .viewport {
    display: flex;
    flex-direction: column;
    flex: 1;
    min-height: 0;
    margin-top: 3px;
    border-top: 1px solid #716f64;
    border-left: 2px solid #9b9784;
    border-right: 2px solid #f1efe2;
    font-family: "DejaVu Sans", "Noto Sans CJK TC", sans-serif;
  }

  .taskbar {
    display: flex;
    align-items: center;
    flex: none;
    height: 42px;
    padding-right: 14px;
    border-bottom: 2px solid #2c3947;
    background:
      repeating-linear-gradient(135deg, rgba(255, 255, 255, 0.04) 0 1px, transparent 1px 3px),
      linear-gradient(#52616f, #3e4b57);
  }

  .handle {
    width: 19px;
    height: 38px;
    border: 1px solid #2c3136;
    background: linear-gradient(#989a9c, #77797b 50%, #55585a 50%, #737577);
  }

  .start {
    width: 42px;
    height: 40px;
    margin-left: 14px;
    border: 2px solid #d6f2fd;
    border-radius: 6px;
    background: linear-gradient(#a6d3ee, #64acd8 50%, #2c87c2 50%, #5cd0f4);
    box-shadow: inset 0 0 3px #fff;
  }

  .start svg {
    width: 38px;
    height: 36px;
  }

  .task {
    justify-content: center;
    width: 48px;
    height: 38px;
    margin-left: 23px;
    border: 1px solid #9aa3ab;
    border-radius: 3px;
    background: linear-gradient(#99a1a8, #727c85 50%, #848e96);
  }

  .find {
    display: flex;
    align-items: center;
    gap: 2px;
    width: 177px;
    height: 30px;
    margin-left: auto;
    padding: 4px 5px 0;
    border: 2px solid #20282f;
    background: linear-gradient(#c9ccce, #fafafa);
    box-shadow: inset 0 0 0 1px #999da1;
    font-size: 16px;
  }

  .find input,
  .panel-search input {
    flex: 1;
  }

  .find input::placeholder,
  .panel-search input::placeholder {
    color: #7f8081;
    opacity: 1;
  }

  .sep {
    width: 2px;
    height: 26px;
    margin: 0 64px 0 10px;
    background: #1d252d;
    border-right: 1px solid #6b7680;
  }

  .desktop {
    position: relative;
    display: flex;
    flex: 1;
    min-height: 0;
    padding-right: 77px;
    background:
      repeating-linear-gradient(135deg, rgba(255, 255, 255, 0.13) 0 1px, transparent 1px 3px),
      linear-gradient(#5f89b8, #75a5d8 8px, #75a5d8 35%, #2f68a5);
  }

  .shortcuts {
    flex: none;
    width: 126px;
    padding-top: 25px;
  }

  .shortcut,
  .item {
    position: relative;
    flex-direction: column;
    width: 100%;
    border: 0;
    background: none;
  }

  .shortcut {
    gap: 6px;
    margin-bottom: 41px;
    color: #fff;
    font-size: 15px;
    line-height: 22px;
    text-shadow: 1px 1px 1px #1e3a5e;
  }

  .desk-icon,
  .app-icon {
    filter: drop-shadow(1px 1px 1px rgba(0, 0, 0, 0.35));
  }

  .shortcut.marked::after,
  .item.marked::after {
    content: "";
    position: absolute;
    border: 8px solid #ed1c24;
    border-radius: 18px;
  }

  .shortcut.marked::after {
    inset: -10px 9px -10px 23px;
  }

  .item.marked::after {
    inset: -17px -2px -17px -7px;
  }

  .panel {
    display: flex;
    flex-direction: column;
    flex: 1;
    min-width: 0;
    margin-top: 12px;
    border: 1px solid #b1b6ba;
    border-bottom: 0;
    border-radius: 6px 6px 0 0;
    background: #d1d6da;
    overflow: hidden;
  }

  .panel-head {
    flex: none;
    height: 72px;
    padding: 2px 8px 0 5px;
    border-bottom: 1px solid #a2a5a8;
    background: linear-gradient(#e3e8ec, #cfd4d8);
  }

  .panel-title {
    display: flex;
    align-items: center;
    gap: 3px;
    height: 27px;
    padding-left: 3px;
  }

  h2 {
    flex: 1;
    margin: 0;
    padding-bottom: 4px;
    color: #3c3f42;
    font-size: 17px;
    line-height: 22px;
  }

  .panel-tools {
    display: flex;
    align-items: center;
    gap: 7px;
    margin-top: 8px;
  }

  .nav-button {
    justify-content: center;
    width: 33px;
    height: 28px;
    border: 1px solid #6d7882;
    border-radius: 4px;
    background: linear-gradient(#fbfbfc, #d8dcdf);
  }

  .home {
    width: 45px;
    margin-left: 8px;
  }

  .panel-search {
    display: flex;
    align-items: center;
    gap: 2px;
    width: 249px;
    height: 28px;
    margin-left: auto;
    margin-right: -3px;
    padding: 0 3px;
    border: 1px solid #b0b5cb;
    background: #fff;
    font-size: 16px;
  }

  .question {
    justify-content: center;
    width: 28px;
    height: 28px;
    border: 1px solid #abb0b4;
    border-radius: 4px;
    background: #dfe3e6;
    color: #5a5e62;
    font-size: 18px;
    font-weight: bold;
  }

  .panel-body {
    display: flex;
    flex: 1;
    min-height: 0;
    background: #fafafa;
  }

  .sections {
    flex: 1;
    min-width: 0;
    overflow: hidden;
  }

  /* list is shown slightly scrolled down */
  .sections > section:first-child {
    margin-top: -10px;
  }

  .sections > section {
    height: 121px;
  }

  h3 {
    display: flex;
    align-items: center;
    gap: 8px;
    margin: 0 2px 8px 19px;
    color: #3a3a3a;
    font-size: 16px;
    line-height: 24px;
  }

  h3::after {
    content: "";
    flex: 1;
    height: 1px;
    margin-top: 6px;
    background: #d6dde3;
  }

  .items {
    display: grid;
    grid-template-columns: repeat(8, 1fr);
    padding: 0 44px 0 11px;
  }

  .item {
    font-size: 16px;
    line-height: 26px;
  }

  .item.latin {
    font-size: 13px;
    line-height: 28px;
  }

  .scrollbar {
    display: flex;
    flex-direction: column;
    width: 19px;
    padding: 1px;
    background: linear-gradient(90deg, #f0efe8, #fefefb);
    border-right: 1px solid #d3d7de;
  }

  .scrollbar .drop {
    width: 17px;
    height: 19px;
    border-color: #9db3ea;
  }

  .track {
    display: flex;
    flex: 1;
    padding: 12px 0 48px;
  }

  .thumb {
    flex: 1;
    border: 1px solid #a6bbf0;
    border-radius: 2px;
    background:
      repeating-linear-gradient(#eef4fe 0 1px, #8ea8e4 1px 2px) center / 6px 8px no-repeat,
      linear-gradient(90deg, #cfdcfd, #b9cbf8);
  }

  .panel-foot {
    flex: none;
    height: 21px;
    border-top: 1px solid #a2a5a8;
    background: #d1d6da;
  }

  .version {
    position: absolute;
    right: 25px;
    bottom: 34px;
    color: rgba(255, 255, 255, 0.35);
    font: bold 26px/28px "DejaVu Sans", sans-serif;
  }

  .panel {
    z-index: 1;
  }

  /* status bar */
  .status {
    display: flex;
    align-items: stretch;
    flex: none;
    height: 24px;
    padding-top: 1px;
    border-top: 2px solid #aca899;
    background: linear-gradient(#f7f5ea, #e9e6d5 6px);
  }

  .done {
    flex: 1;
    align-self: center;
    padding-left: 2px;
  }

  .cell {
    display: flex;
    align-items: center;
    gap: 4px;
    width: 24px;
    padding-left: 4px;
    border-left: 1px solid #c5c2b2;
    box-shadow: inset 1px 0 0 #fff;
  }

  .zone {
    width: 148px;
  }

  .lock {
    width: 43px;
    padding-left: 8px;
  }

  .zoom {
    width: 98px;
    padding-left: 11px;
  }

  .zoom i {
    margin-left: 10px;
  }

  .grip {
    align-self: flex-end;
    margin-left: auto;
  }
</style>
